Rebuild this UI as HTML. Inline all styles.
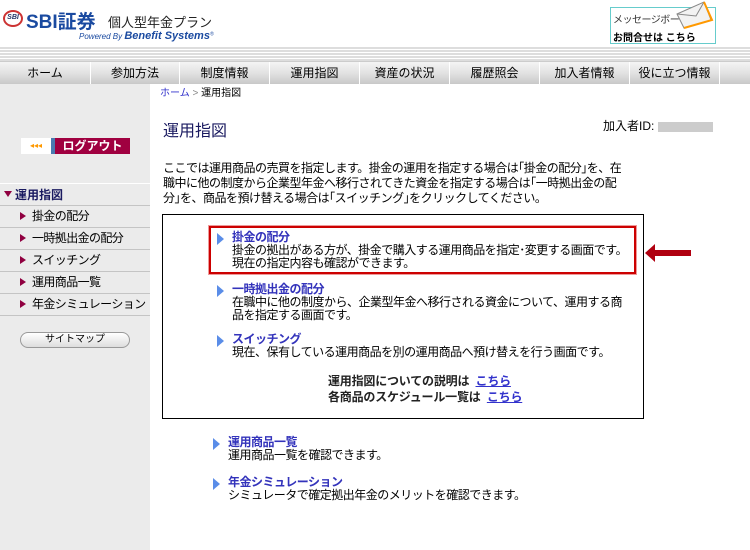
<!DOCTYPE html>
<html><head><meta charset="utf-8"><style>
*{margin:0;padding:0;box-sizing:border-box}
body{width:750px;height:550px;overflow:hidden;background:#fff;font-family:"Liberation Sans","Noto Sans CJK JP",sans-serif;font-size:12px;color:#000;position:relative}
.a{position:absolute;white-space:nowrap}
.t{letter-spacing:-0.5px}
.stripes{position:absolute;left:0;top:46px;width:750px;height:15px;background:repeating-linear-gradient(#fff 0 1px,#ddd 1px 3px)}
.nav{position:absolute;left:0;top:61px;width:750px;height:23px;background:linear-gradient(#f4f4f4,#e2e2e2 50%,#c8c8c8);border-top:1px solid #ccc}
.nav div{position:absolute;top:0;height:22px;line-height:22px;text-align:center;font-size:12px;border-left:1px solid #fff}
.side{position:absolute;left:0;top:84px;width:150px;height:466px;background:#ebebeb}
.mi{position:absolute;left:0;width:150px;height:22px;border-top:1px solid #c4c4c4;line-height:21px;padding-left:32px;font-size:12px;white-space:nowrap;letter-spacing:-0.6px}
.mi:before{content:"";position:absolute;left:20px;top:6px;border-left:6px solid #900040;border-top:4.5px solid transparent;border-bottom:4.5px solid transparent}
.tri{position:absolute;border-left:7px solid #5a8de8;border-top:6px solid transparent;border-bottom:6px solid transparent}
.lk{color:#3333bb;font-weight:bold;font-size:12px}
</style></head><body>
<div class="a" style="left:3px;top:10px;width:20px;height:17px;border-radius:50%;border:2px solid #c33;font-size:7px;font-weight:bold;color:#236;line-height:12px;text-align:center;font-style:italic">SBI</div>
<div class="a" style="left:26px;top:7px;font-size:19px;font-weight:bold;color:#1a4aa0">SBI証券</div>
<div class="a" style="left:108px;top:12px;font-size:13px;color:#222">個人型年金プラン</div>
<div class="a" style="left:79px;top:30px;font-size:8px;color:#1a4aa0;font-style:italic">Powered By <b style="font-size:11px">Benefit Systems</b><sup style="font-size:5px">®</sup></div>
<div class="a" style="left:610px;top:7px;width:106px;height:37px;border:1px solid #6cc;background:#fff">
<div class="a" style="left:2px;top:3px;font-size:10px;color:#333;letter-spacing:-0.5px">メッセージボード</div>
<div class="a" style="left:2px;top:21px;font-size:10px;font-weight:bold">お問合せは こちら</div>
</div>
<svg class="a" style="left:674px;top:0" width="40" height="30"><polygon points="3,14 30,2 37,20 10,28" fill="#f2f2f2" stroke="#888"/><polyline points="3,14 22,16 30,2" fill="none" stroke="#888"/><polyline points="30,2 38,20 10,28" fill="none" stroke="#f90" stroke-width="2"/></svg>
<div class="stripes"></div>
<div class="nav">
<div style="left:0;width:90px;border-left:none">ホーム</div><div style="left:90px;width:89px">参加方法</div><div style="left:179px;width:90px">制度情報</div><div style="left:269px;width:90px">運用指図</div><div style="left:359px;width:90px">資産の状況</div><div style="left:449px;width:90px">履歴照会</div><div style="left:539px;width:90px">加入者情報</div><div style="left:629px;width:90px">役に立つ情報</div><div style="left:719px;width:31px"></div>
</div>
<div class="side"></div>
<div class="a" style="left:160px;top:84px;font-size:10px"><span style="color:#33c">ホーム</span> <span style="color:#888">&gt;</span> 運用指図</div>
<div class="a" style="left:21px;top:138px;width:30px;height:16px;background:#fff;color:#f90;font-size:8px;line-height:16px;text-align:center">◂◂◂</div>
<div class="a" style="left:51px;top:138px;width:4px;height:16px;background:#4a7ab0"></div>
<div class="a" style="left:55px;top:138px;width:75px;height:16px;background:#a00040;color:#fff;font-weight:bold;font-size:12px;line-height:16px;text-align:center">ログアウト</div>
<div class="a" style="left:0;top:183px;width:150px;height:23px;border-top:1px solid #fff;padding-left:15px;line-height:22px;font-weight:bold;color:#1a1a60;font-size:12px">運用指図</div>
<div class="a" style="left:4px;top:191px;border-top:6px solid #900040;border-left:4.5px solid transparent;border-right:4.5px solid transparent"></div>
<div class="mi" style="top:205px">掛金の配分</div>
<div class="mi" style="top:227px">一時拠出金の配分</div>
<div class="mi" style="top:249px">スイッチング</div>
<div class="mi" style="top:271px">運用商品一覧</div>
<div class="mi" style="top:293px">年金シミュレーション</div>
<div class="a" style="left:0;top:315px;width:150px;border-top:1px solid #c4c4c4"></div>
<div class="a" style="left:20px;top:332px;width:110px;height:16px;border:1px solid #999;border-radius:8px;background:linear-gradient(#fff,#ddd);font-size:10px;text-align:center;line-height:14px">サイトマップ</div>
<div class="a" style="left:163px;top:117px;font-size:16px;color:#1a1a60">運用指図</div>
<div class="a" style="left:603px;top:117px;font-size:12px">加入者ID: <span style="display:inline-block;width:55px;height:10px;background:#ccc;vertical-align:middle"></span></div>
<div class="a t" style="left:163px;top:161px;font-size:12px;line-height:15px">ここでは運用商品の売買を指定します。掛金の運用を指定する場合は｢掛金の配分｣を、在<br>職中に他の制度から企業型年金へ移行されてきた資金を指定する場合は｢一時拠出金の配<br>分｣を、商品を預け替える場合は｢スイッチング｣をクリックしてください。</div>
<div class="a" style="left:162px;top:214px;width:482px;height:205px;border:1px solid #000"></div>
<div class="a" style="left:209px;top:226px;width:427px;height:48px;border:2px solid #c00;outline:1px solid #e99"></div>
<div class="tri" style="left:217px;top:233px"></div>
<div class="a t" style="left:232px;top:231px;line-height:13px"><span class="lk">掛金の配分</span><br>掛金の拠出がある方が、掛金で購入する運用商品を指定･変更する画面です。<br>現在の指定内容も確認ができます。</div>
<svg class="a" style="left:645px;top:243px" width="46" height="20"><polygon points="0,10 10,1 10,7 46,7 46,13 10,13 10,19" fill="#b00010"/></svg>
<div class="tri" style="left:217px;top:285px"></div>
<div class="a t" style="left:232px;top:283px;line-height:13px"><span class="lk">一時拠出金の配分</span><br>在職中に他の制度から、企業型年金へ移行される資金について、運用する商<br>品を指定する画面です。</div>
<div class="tri" style="left:217px;top:335px"></div>
<div class="a t" style="left:232px;top:333px;line-height:13px"><span class="lk">スイッチング</span><br>現在、保有している運用商品を別の運用商品へ預け替えを行う画面です。</div>
<div class="a" style="left:328px;top:373px;font-weight:bold;line-height:16px;color:#222;letter-spacing:-0.2px">運用指図についての説明は&nbsp; <u style="color:#33c">こちら</u><br>各商品のスケジュール一覧は&nbsp; <u style="color:#33c">こちら</u></div>
<div class="tri" style="left:213px;top:438px"></div>
<div class="a t" style="left:228px;top:436px;line-height:13px"><span class="lk">運用商品一覧</span><br>運用商品一覧を確認できます。</div>
<div class="tri" style="left:213px;top:478px"></div>
<div class="a t" style="left:228px;top:476px;line-height:13px"><span class="lk">年金シミュレーション</span><br>シミュレータで確定拠出年金のメリットを確認できます。</div>
</body></html>
